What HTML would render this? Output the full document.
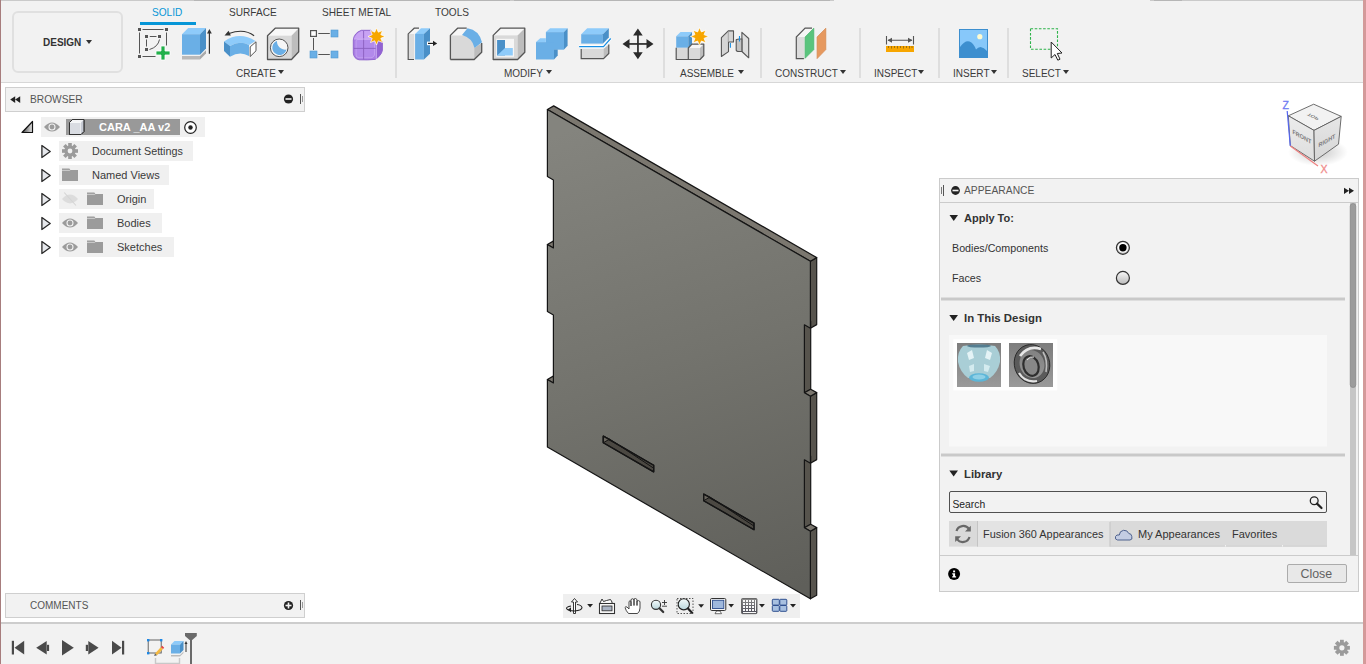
<!DOCTYPE html>
<html><head><meta charset="utf-8">
<style>
*{margin:0;padding:0;box-sizing:border-box}
html,body{width:1366px;height:664px;overflow:hidden;background:#fff;font-family:"Liberation Sans",sans-serif;color:#3c3c3c}
.a{position:absolute}
.t{position:absolute;white-space:nowrap;line-height:1}
svg{position:absolute;overflow:visible}
.lbl{font-size:10px;color:#3a3a3a}
.tri{position:absolute;width:0;height:0;border-left:3px solid transparent;border-right:3px solid transparent;border-top:4px solid #333}
.sep{position:absolute;top:28px;width:2px;height:50px;background:#dedede}
.row{position:absolute;height:20px;background:#f0f0f0}
.rt{font-size:10.6px;color:#3a3a3a}
</style></head><body>
<!-- toolbar -->
<div class="a" style="left:0;top:0;width:1366px;height:83px;background:#f2f2f2;border-bottom:1px solid #d7d7d7"></div>
<div class="a" style="left:0;top:0;width:194px;height:1px;background:#cacaca"></div>
<div class="a" style="left:194px;top:0;width:316px;height:1px;background:#b6b6b6"></div>
<div class="a" style="left:510px;top:0;width:4px;height:1px;background:#cacaca"></div>
<div class="a" style="left:514px;top:0;width:316px;height:1px;background:#b6b6b6"></div>
<div class="a" style="left:830px;top:0;width:4px;height:1px;background:#cacaca"></div>
<div class="a" style="left:1150px;top:0;width:4px;height:1px;background:#cacaca"></div>
<div class="a" style="left:1154px;top:0;width:28px;height:1px;background:#b6b6b6"></div>
<div class="a" style="left:1182px;top:0;width:184px;height:1px;background:#cacaca"></div>
<!-- design button -->
<div class="a" style="left:12px;top:11px;width:111px;height:62px;border:2px solid #e0e0e0;border-radius:6px;background:#f2f2f2"></div>
<div class="t" style="left:43px;top:38px;font-size:10px;font-weight:bold;color:#333">DESIGN</div>
<div class="tri" style="left:86px;top:40px"></div>
<!-- tabs -->
<div class="t" style="left:152px;top:8px;font-size:10.1px;color:#0696d7">SOLID</div>
<div class="a" style="left:140px;top:22px;width:56px;height:3px;background:#0696d7"></div>
<div class="t lbl" style="left:229px;top:8px;font-size:10.1px">SURFACE</div>
<div class="t lbl" style="left:322px;top:8px;font-size:10.1px">SHEET METAL</div>
<div class="t lbl" style="left:435px;top:8px;font-size:10.1px">TOOLS</div>
<!-- group labels -->
<div class="t lbl" style="left:236px;top:69px">CREATE</div><div class="tri" style="left:278px;top:70px"></div>
<div class="t lbl" style="left:504px;top:69px">MODIFY</div><div class="tri" style="left:546px;top:70px"></div>
<div class="t lbl" style="left:680px;top:69px">ASSEMBLE</div><div class="tri" style="left:738px;top:70px"></div>
<div class="t lbl" style="left:775px;top:69px">CONSTRUCT</div><div class="tri" style="left:840px;top:70px"></div>
<div class="t lbl" style="left:874px;top:69px">INSPECT</div><div class="tri" style="left:918px;top:70px"></div>
<div class="t lbl" style="left:953px;top:69px">INSERT</div><div class="tri" style="left:991px;top:70px"></div>
<div class="t lbl" style="left:1022px;top:69px">SELECT</div><div class="tri" style="left:1063px;top:70px"></div>
<div class="sep" style="left:395px"></div>
<div class="sep" style="left:663px"></div>
<div class="sep" style="left:760px"></div>
<div class="sep" style="left:859px"></div>
<div class="sep" style="left:938px"></div>
<div class="sep" style="left:1007px"></div>
<!--ICONS-->
<svg style="left:0;top:0" width="1366" height="90">
<defs>
<symbol id="star" viewBox="-10 -10 20 20"><path d="M0,-9.5 L2,-4.8 L6.7,-6.7 L4.8,-2 L9.5,0 L4.8,2 L6.7,6.7 L2,4.8 L0,9.5 L-2,4.8 L-6.7,6.7 L-4.8,2 L-9.5,0 L-4.8,-2 L-6.7,-6.7 L-2,-4.8 Z" fill="#f7a600" stroke="#fff" stroke-width="0.8"/></symbol>
</defs>
<!-- 1 sketch -->
<g fill="#555">
<rect x="138" y="28" width="3" height="3"/><rect x="165" y="28" width="3" height="3"/><rect x="138" y="55" width="3" height="3"/>
<rect x="145" y="35" width="3" height="3"/><rect x="158" y="35" width="3" height="3"/><rect x="145" y="48" width="3" height="3"/>
</g>
<g stroke="#555" stroke-width="1" fill="none">
<path d="M142.5,29.5 H163.5 M139.5,32.5 V53.5 M166.5,32.5 V45.5 M142.5,56.5 H155.5 M149.8,36.5 H156.5 M146.5,39.5 V46.5 M159.5,39.5 Q158,47 149.5,49.5"/>
</g>
<path d="M161,46 H165 V51 H170 V55 H165 V60 H161 V55 H156 V51 H161 Z" fill="#22b04b" stroke="#fff" stroke-width="0.8"/>
<!-- 2 extrude -->
<path d="M182,34.2 L188.2,28.1 H206 L200,34.2 Z" fill="#8ecbfa"/>
<rect x="182" y="34.2" width="18" height="20.5" fill="#6aafe6"/>
<path d="M200,34.2 L206,28.1 V48.5 L200,54.7 Z" fill="#4a90c8"/>
<path d="M182,56 H200 V59.5 H182 Z" fill="#b9b9b9"/><path d="M200,56 L206,50.3 V53.6 L200,59.5 Z" fill="#a9a9a9"/>
<path d="M209.4,33 V53.8" stroke="#333" stroke-width="1.2"/><path d="M207,33.5 L209.4,29 L211.8,33.5 Z" fill="#333"/>
<!-- 3 revolve -->
<path d="M254.1,35.7 Q244,28 229,33.5" stroke="#333" stroke-width="1.1" fill="none"/>
<path d="M224.5,35.6 L228.6,30.8 L230.8,35.4 Z" fill="#333"/>
<path d="M224,41.5 Q239.5,31 255.5,41 L249,45 Q240,40 230,46 Z" fill="#8ecbfa"/>
<path d="M230,46 Q240,40 249,45 V56 Q240,50.5 230,56.8 Z" fill="#6aafe6"/>
<path d="M224,41.5 L230,46 V56.8 L224,51 Z" fill="#4a90c8"/>
<path d="M250.2,46.9 L256,41.8 V50.8 L250.2,56.5 Z" fill="#fff" stroke="#555" stroke-width="1"/>
<!-- 4 hole -->
<path d="M267.5,35.7 L275.2,28.2 H298.7 L291.5,35.7 Z" fill="#f8f8f8"/>
<rect x="267.5" y="35.7" width="24" height="23.8" fill="#d9d9d9"/>
<path d="M291.5,35.7 L298.7,28.2 V51.7 L291.5,59.5 Z" fill="#bdbdbd"/>
<path d="M267.5,59.5 V35.7 L275.2,28.2 H298.7 V51.7 L291.5,59.5 Z" fill="none" stroke="#555" stroke-width="1.3" stroke-linejoin="round"/>
<circle cx="279.2" cy="47.8" r="8.8" fill="#f6f6f6" stroke="#555" stroke-width="1"/>
<path d="M277,41 A7.2,7.2 0 1 0 286.5,49.5 A8,8 0 0 1 277,41 Z" fill="#6aafe6"/>
<!-- 5 pattern -->
<rect x="310.6" y="30.6" width="5.8" height="5.8" fill="#fff" stroke="#555" stroke-width="1.2"/>
<rect x="331" y="30" width="7" height="7" fill="#6aafe6" stroke="#4f97d0" stroke-width="0.6"/>
<rect x="310" y="51" width="7" height="7" fill="#6aafe6" stroke="#4f97d0" stroke-width="0.6"/>
<rect x="331" y="51" width="7" height="7" fill="#6aafe6" stroke="#4f97d0" stroke-width="0.6"/>
<path d="M318.3,33.5 H329.8 M313.5,38 V50 M318.3,54.5 H329.8" stroke="#555" stroke-width="1"/>
<!-- 6 form -->
<path d="M353.3,40 Q354,33 361.3,30.3 H371 L382.4,42 V50.5 Q381,56 375.1,59.4 Q368,60.2 359,59.8 Q353.6,58.5 353.3,53 Z" fill="#a97ee3" stroke="#8d62cc" stroke-width="0.9"/>
<path d="M354,39.5 Q355,33.5 361.5,31 H371.5 L376.5,38.8 H354 Z" fill="#c8a2f4"/>
<path d="M376.3,38.8 L382.2,42.5 V50.5 Q381,55.5 376.3,58.8 Z" fill="#9263d2"/>
<path d="M356,41 Q356,39.5 358,39.5 H374.5 V55 Q374,57.5 371,57.8 H359 Q356,57.5 356,55 Z" fill="#b28aeb" stroke="#c6a6f3" stroke-width="0.8"/>
<path d="M363.6,31 V59.5 M353.8,48.4 H376" stroke="#8a5fc0" stroke-width="0.9"/>
<path d="M354,39 H376.3 V59" fill="none" stroke="#d6bdf7" stroke-width="0.8"/>
<use href="#star" x="367.5" y="27.5" width="18" height="18"/>
<!-- 7 press pull -->
<path d="M408.2,59.5 V33.9 L414.2,28.2 H419 V59.5 Z" fill="#f6f6f6"/>
<rect x="408.8" y="33.9" width="5.5" height="25.4" fill="#dcdcdc"/>
<path d="M414,59.5 H408.2 V33.9 L414.2,28.2 H419" fill="none" stroke="#555" stroke-width="1.2"/>
<path d="M415.1,33.9 L421,28.2 H430 L423.9,33.9 Z" fill="#8ecbfa"/>
<rect x="415.1" y="33.9" width="8.8" height="25.6" fill="#6aafe6"/>
<path d="M423.9,33.9 L430,28.2 V53.8 L423.9,59.5 Z" fill="#4a90c8"/>
<rect x="427" y="41.6" width="6" height="3.6" fill="#fff"/>
<path d="M428,43.4 H434" stroke="#222" stroke-width="1.2"/><path d="M433,40.8 L437.2,43.4 L433,46 Z" fill="#222"/>
<!-- 8 fillet -->
<path d="M450.4,35.4 L457.6,28.2 H467 L462,35.4 Z" fill="#f6f6f6"/>
<path d="M450.4,35.4 H462 Q474,36.5 474.2,48 V59.5 H450.4 Z" fill="#d9d9d9"/>
<path d="M474.2,48 L481.7,43 V52.3 L474.2,59.5 Z" fill="#bdbdbd"/>
<path d="M462,35 L467.5,28.2 Q479,30 482,42.2 L474.5,48 Q472.5,38 462,35 Z" fill="#6aafe6"/>
<path d="M450.4,59.5 V35.4 L457.6,28.2 H466.7 M450.4,59.5 H474.2 L481.7,52.3 V43" fill="none" stroke="#555" stroke-width="1.3" stroke-linejoin="round"/>
<!-- 9 shell -->
<path d="M493.2,35.4 L500.4,28.2 H524.8 L517.6,35.4 Z" fill="#f6f6f6"/>
<rect x="493.2" y="35.4" width="24.4" height="24.1" fill="#d9d9d9"/>
<path d="M517.6,35.4 L524.8,28.2 V52.3 L517.6,59.5 Z" fill="#bdbdbd"/>
<path d="M493.2,59.5 V35.4 L500.4,28.2 H524.8 V52.3 L517.6,59.5 Z" fill="none" stroke="#555" stroke-width="1.3" stroke-linejoin="round"/>
<rect x="496.2" y="38.8" width="17.8" height="18" fill="#f6f6f6"/>
<rect x="497.1" y="40" width="7.9" height="15.5" fill="#4a90c8"/>
<path d="M497.1,55.5 L505,48.1 H512.8 V55.6 H497.1 Z" fill="#8ecbfa"/>
<!-- 10 combine -->
<path d="M545.9,32.1 L550.1,28.2 H567.6 L564,32.1 Z" fill="#8ecbfa"/>
<rect x="545.9" y="32.1" width="18.1" height="17.6" fill="#6aafe6"/>
<path d="M564,32.1 L567.6,28.2 V45.7 L564,49.6 Z" fill="#4a90c8"/>
<path d="M536,42.1 L540.2,38.2 H545.9 V42.1 Z" fill="#8ecbfa"/>
<rect x="536" y="42.1" width="18" height="17.4" fill="#6aafe6"/>
<path d="M554,49.6 H557.7 V55.6 L554,59.5 Z" fill="#4a90c8"/>
<!-- 11 split -->
<path d="M581.2,34.2 L587.2,28.2 H608.8 L602.9,34.2 Z" fill="#8ecbfa"/>
<rect x="581.2" y="34.2" width="21.7" height="9.4" fill="#6aafe6"/>
<path d="M602.9,34.2 L608.8,28.2 V37.6 L602.9,43.6 Z" fill="#4a90c8"/>
<path d="M579.1,46.6 H603.5 L610.7,38.5" fill="none" stroke="#fff" stroke-width="3"/>
<path d="M579.1,46.6 H603.5 L610.7,38.5" fill="none" stroke="#1a8fe3" stroke-width="1.2"/>
<rect x="581.2" y="49" width="22.3" height="9.6" fill="#d9d9d9"/>
<path d="M603.5,49 L608.8,44.5 V53.5 L603.5,58.6 Z" fill="#bdbdbd"/>
<path d="M581.2,49 V58.6 H603.5 L608.8,53.5 V44.5" fill="none" stroke="#555" stroke-width="1.2"/>
<!-- 12 move -->
<g fill="#2b2b2b">
<rect x="637.1" y="33" width="1.7" height="22"/><rect x="627" y="43.1" width="22" height="1.7"/>
<path d="M637.9,28.5 L642.7,35.5 H633.1 Z M637.9,59.3 L642.7,52.2 H633.1 Z M622.5,43.9 L629.5,39.1 V48.7 Z M653.5,43.9 L646.5,39.1 V48.7 Z"/>
</g>
<!-- 13 new component -->
<path d="M676.2,36.3 L680.5,32.1 H692 L688.3,36.3 Z" fill="#8ecbfa"/>
<rect x="676.2" y="36.3" width="12.1" height="11.5" fill="#6aafe6"/>
<path d="M688.3,36.3 L692,32.1 V43.5 L688.3,47.8 Z" fill="#4a90c8"/>
<rect x="676.2" y="47.8" width="12.1" height="11.7" fill="#d9d9d9"/>
<path d="M688.3,48 L692,44.1 H703.8 L700,48 Z" fill="#f6f6f6"/>
<rect x="688.3" y="48" width="11.7" height="11.5" fill="#d9d9d9"/>
<path d="M700,48 L703.8,44.1 V55.5 L700,59.5 Z" fill="#bdbdbd"/>
<path d="M676.2,47.8 V59.5 H700 L703.8,55.5 V44.1 H692 L688.3,48 V59.5" fill="none" stroke="#555" stroke-width="1.2" stroke-linejoin="round"/>
<use href="#star" x="690" y="27" width="19" height="19"/>
<!-- 14 joint -->
<path d="M721.4,56.5 V37.6 L728.3,30.9 H733.5 V42 H728.5 V51.6 Z" fill="#d5d5d5" stroke="#555" stroke-width="1.1" stroke-linejoin="round"/>
<path d="M728.3,31.5 V42" stroke="#999" stroke-width="0.8"/>
<path d="M741.9,32.4 L748.7,38.5 V57.8 L741.9,51.5 Z" fill="#dedede" stroke="#555" stroke-width="1.1" stroke-linejoin="round"/>
<path d="M736.2,40 Q736.2,39 739,39 H741.9 V51.5 H739 Q736.2,51.5 736.2,50 Z" fill="#c4c4c4" stroke="#555" stroke-width="1.1"/>
<path d="M730.4,43 V47.8 M739.5,36 V41.5" stroke="#1a8fe3" stroke-width="1.1"/>
<!-- 15 construct -->
<path d="M796.3,58.6 V37 L805.1,28.2 H812 L805.1,37 Z" fill="#f6f6f6"/>
<rect x="797" y="37" width="7.5" height="21.6" fill="#dcdcdc"/>
<path d="M803.9,58.6 H796.3 V37 L805.1,28.2 H812" fill="none" stroke="#555" stroke-width="1.2"/>
<path d="M805.1,37 L813.8,28.2 V49.6 L805.1,58.3 Z" fill="#5ac47d" stroke="#46b46a" stroke-width="0.7"/>
<path d="M817.1,37 L825.8,28.2 V49.6 L817.1,58.6 Z" fill="#e6995f" stroke="#d5874c" stroke-width="0.7"/>
<!-- 16 inspect -->
<path d="M886.5,36 V44.5 M913.5,36 V44.5 M888,40.3 H912" stroke="#555" stroke-width="1.1"/>
<path d="M887.5,40.3 L892,37.8 V42.8 Z M912.5,40.3 L908,37.8 V42.8 Z" fill="#555"/>
<rect x="886" y="46" width="28" height="6" fill="#f7a600"/>
<path d="M888.5,46 V48 M891.5,46 V48.5 M894.5,46 V48 M897.5,46 V48.5 M900.5,46 V48 M903.5,46 V48.5 M906.5,46 V48 M909.5,46 V48.5 M912,46 V48" stroke="#7a5a10" stroke-width="0.7"/>
<!-- 17 insert -->
<rect x="959" y="29" width="29" height="29" fill="#3d8fcf"/>
<rect x="960" y="30" width="27" height="27" fill="#87c8fa"/>
<circle cx="979.8" cy="36.7" r="2.6" fill="#fffbd0"/>
<path d="M960,47 Q965,40 969.5,41.5 Q973.5,43 976,49.5 Q978,47 980.5,47 Q984,47.5 987,51 V57 H960 Z" fill="#3d8fcf"/>
<!-- 18 select -->
<rect x="1030.5" y="28.7" width="27" height="20.5" fill="none" stroke="#2db34a" stroke-width="1.1" stroke-dasharray="2.6 1.6"/>
<path d="M1051.2,42 V58 L1055,54.5 L1057.8,60.2 L1060,59.2 L1057.3,53.5 L1062,53 Z" fill="#fff" stroke="#222" stroke-width="1" stroke-linejoin="round"/>
</svg>

<!--/ICONS-->

<!-- browser -->
<div class="a" style="left:5px;top:87px;width:300px;height:25px;background:#f2f2f2;border:1px solid #cfcfcf"></div>
<div class="t" style="left:30px;top:95px;font-size:10.2px;color:#555">BROWSER</div>
<!--TREE-->
<svg style="left:0;top:0" width="310" height="260">
<defs><linearGradient id="tg" x1="0" y1="0" x2="1" y2="0"><stop offset="0" stop-color="#444"/><stop offset="1" stop-color="#e6e6e6"/></linearGradient>
<symbol id="otri" viewBox="0 0 10 14"><path d="M0.9,0.9 L9.2,7 L0.9,13.1 Z" fill="#e6e8ec" stroke="#2a2a2a" stroke-width="1.3" stroke-linejoin="round"/></symbol>
<symbol id="fold" viewBox="0 0 16 14"><path d="M0,0.5 H7.3 L8.5,1.8 H16 V13 H0 Z" fill="#9b9b9b"/><path d="M0,2.3 H7.6 L8.6,1.6" stroke="#f0f0f0" stroke-width="0.6" fill="none"/></symbol>
<symbol id="eye" viewBox="0 0 16 10"><path d="M0,5 Q8,-4.2 16,5 Q8,14.2 0,5 Z" fill="#9b9b9b"/><circle cx="8" cy="5" r="3" fill="none" stroke="#f0f0f0" stroke-width="1.1"/></symbol>
</defs>
<!-- browser header icons -->
<path d="M10.2,99.6 L15.2,96.3 V102.9 Z M15.2,99.6 L20.2,96.3 V102.9 Z" fill="#222"/>
<circle cx="288.5" cy="99" r="4.6" fill="#222"/><rect x="285.5" y="98.2" width="6" height="1.6" fill="#f2f2f2"/>
<rect x="300" y="94" width="1" height="10" fill="#555"/><rect x="302" y="96" width="1" height="6" fill="#999"/>
<!-- row0 -->
<path d="M22,132.5 L32.5,121.5 V132.5 Z" fill="url(#tg)" stroke="#111" stroke-width="1.2" stroke-linejoin="round"/>
<rect x="41" y="117" width="164" height="20" fill="#f0f0f0"/>
<use href="#eye" x="44" y="122" width="16" height="10"/>
<rect x="66" y="119" width="114" height="16" fill="#999"/>
<path d="M69.5,122.5 L72.5,119.5 H84 V131.5 L81,134.5 H69.5 Z" fill="#d9dce2" stroke="#333" stroke-width="1"/>
<path d="M69.5,122.5 H81 V134.5 M81,122.5 L84,119.5" fill="none" stroke="#fff" stroke-width="0.8"/>
<path d="M70,122.5 L72.5,120 H83.5 L81,122.5 Z" fill="#f4f5f7"/>
<path d="M81,122.5 L83.5,120 V131.5 L81,134 Z" fill="#c6cad3"/>
<path d="M69.5,122.5 L72.5,119.5 H84 V131.5 L81,134.5 H69.5 Z" fill="none" stroke="#333" stroke-width="1"/>
<circle cx="190.5" cy="127.5" r="5.8" fill="#fff" stroke="#222" stroke-width="1.2"/><circle cx="190.5" cy="127.5" r="2.2" fill="#222"/>
<!-- rows 1..5 -->
<g>
<use href="#otri" x="41" y="144.5" width="10" height="14"/>
<use href="#otri" x="41" y="168.5" width="10" height="14"/>
<use href="#otri" x="41" y="192.5" width="10" height="14"/>
<use href="#otri" x="41" y="216.5" width="10" height="14"/>
<use href="#otri" x="41" y="240.5" width="10" height="14"/>
</g>
<rect x="59" y="141" width="134" height="20" fill="#f0f0f0"/>
<rect x="59" y="165" width="110" height="20" fill="#f0f0f0"/>
<rect x="59" y="189" width="95" height="20" fill="#f0f0f0"/>
<rect x="59" y="213" width="103" height="20" fill="#f0f0f0"/>
<rect x="59" y="237" width="115" height="20" fill="#f0f0f0"/>
<!-- gear -->
<g transform="translate(70,151)" fill="#9b9b9b">
<circle r="5.6"/>
<g id="teeth"><rect x="-1.8" y="-8" width="3.6" height="16"/><rect x="-1.8" y="-8" width="3.6" height="16" transform="rotate(45)"/><rect x="-1.8" y="-8" width="3.6" height="16" transform="rotate(90)"/><rect x="-1.8" y="-8" width="3.6" height="16" transform="rotate(135)"/></g>
<circle r="2.4" fill="#f0f0f0"/>
</g>
<use href="#fold" x="62" y="168.1" width="16" height="14"/>
<use href="#fold" x="87" y="192.1" width="16" height="14"/>
<use href="#fold" x="87" y="216.1" width="16" height="14"/>
<use href="#fold" x="87" y="240.1" width="16" height="14"/>
<!-- origin hidden eye -->
<path d="M62,199 Q70,190.2 78,199 Q70,207.8 62,199 Z" fill="#dcdcdc"/><path d="M64.2,192.5 L76,205.5" stroke="#d4d4d4" stroke-width="1.1"/>
<use href="#eye" x="62" y="218" width="16" height="10"/>
<use href="#eye" x="62" y="242" width="16" height="10"/>
</svg>
<div class="t" style="left:99px;top:122px;font-size:11px;font-weight:bold;color:#fff">CARA _AA v2</div>
<div class="t rt" style="left:92px;top:146px;font-size:10.75px">Document Settings</div>
<div class="t rt" style="left:92px;top:170px;font-size:11px">Named Views</div>
<div class="t rt" style="left:117px;top:194px;font-size:11px">Origin</div>
<div class="t rt" style="left:117px;top:218px;font-size:11px">Bodies</div>
<div class="t rt" style="left:117px;top:242px;font-size:11px">Sketches</div>

<!--/TREE-->

<!-- comments -->
<div class="a" style="left:5px;top:593px;width:300px;height:25px;background:#f2f2f2;border:1px solid #cfcfcf"></div>
<div class="t" style="left:30px;top:601px;font-size:10px;color:#555">COMMENTS</div>
<svg style="left:0;top:0" width="310" height="664"><!-- comments header icons -->
<circle cx="288.5" cy="605.5" r="4.6" fill="#222"/><rect x="285.5" y="604.7" width="6" height="1.6" fill="#f2f2f2"/><rect x="287.7" y="602.5" width="1.6" height="6" fill="#f2f2f2"/>
<rect x="300" y="600" width="1" height="10" fill="#555"/><rect x="302" y="602" width="1" height="6" fill="#999"/>
</svg>

<!--BODY-->
<svg class="a" style="left:0;top:0" width="1366" height="664" viewBox="0 0 1366 664">
<defs><linearGradient id="fg" gradientUnits="userSpaceOnUse" x1="600" y1="120" x2="760" y2="600"><stop offset="0" stop-color="#84847e"/><stop offset="0.5" stop-color="#73736d"/><stop offset="1" stop-color="#5f5f5a"/></linearGradient></defs>
<polygon points="810.40,261.25 810.40,328.25 816.70,324.61 816.70,257.61" fill="#57544d" stroke="#151515" stroke-width="1.2" stroke-linejoin="round"/>
<polygon points="804.40,324.79 804.40,392.79 810.70,389.15 810.70,321.15" fill="#57544d" stroke="#151515" stroke-width="1.2" stroke-linejoin="round"/>
<polygon points="810.40,396.25 810.40,463.25 816.70,459.61 816.70,392.61" fill="#57544d" stroke="#151515" stroke-width="1.2" stroke-linejoin="round"/>
<polygon points="804.40,459.79 804.40,527.79 810.70,524.15 810.70,456.15" fill="#57544d" stroke="#151515" stroke-width="1.2" stroke-linejoin="round"/>
<polygon points="810.40,531.25 810.40,598.85 816.70,595.21 816.70,527.61" fill="#57544d" stroke="#151515" stroke-width="1.2" stroke-linejoin="round"/>
<polygon points="547.40,109.50 810.40,261.25 816.70,257.61 553.70,105.86" fill="#7b776f" stroke="#151515" stroke-width="1.2" stroke-linejoin="round"/>
<polygon points="804.40,392.79 810.40,396.25 816.70,392.61 810.70,389.15" fill="#7b776f" stroke="#151515" stroke-width="1.2" stroke-linejoin="round"/>
<polygon points="804.40,527.79 810.40,531.25 816.70,527.61 810.70,524.15" fill="#7b776f" stroke="#151515" stroke-width="1.2" stroke-linejoin="round"/>
<polygon points="547.40,379.50 553.40,382.96 559.70,379.32 553.70,375.86" fill="#7b776f" stroke="#151515" stroke-width="1.2" stroke-linejoin="round"/>
<polygon points="547.40,244.50 553.40,247.96 559.70,244.32 553.70,240.86" fill="#7b776f" stroke="#151515" stroke-width="1.2" stroke-linejoin="round"/>
<polygon points="547.40,109.50 810.40,261.25 810.40,328.25 804.40,324.79 804.40,392.79 810.40,396.25 810.40,463.25 804.40,459.79 804.40,527.79 810.40,531.25 810.40,598.85 547.40,447.10 547.40,379.50 553.40,382.96 553.40,314.96 547.40,311.50 547.40,244.50 553.40,247.96 553.40,179.96 547.40,176.50" fill="url(#fg)" stroke="#151515" stroke-width="1.2" stroke-linejoin="round"/>
<polygon points="603.30,436.15 653.70,465.24 653.70,471.84 603.30,442.75" fill="#4b4842" stroke="#151515" stroke-width="1.3" stroke-linejoin="round"/>
<polygon points="603.30,436.15 603.30,442.75 609.60,439.11" fill="#6a665e" stroke="#151515" stroke-width="1" stroke-linejoin="round"/>
<line x1="609.60" y1="439.11" x2="653.70" y2="468.20" stroke="#151515" stroke-width="1"/>
<polygon points="603.30,436.15 653.70,465.24 653.70,471.84 603.30,442.75" fill="none" stroke="#151515" stroke-width="1.3" stroke-linejoin="round"/>
<polygon points="703.70,494.09 754.00,523.11 754.00,529.71 703.70,500.69" fill="#4b4842" stroke="#151515" stroke-width="1.3" stroke-linejoin="round"/>
<polygon points="703.70,494.09 703.70,500.69 710.00,497.05" fill="#6a665e" stroke="#151515" stroke-width="1" stroke-linejoin="round"/>
<line x1="710.00" y1="497.05" x2="754.00" y2="526.07" stroke="#151515" stroke-width="1"/>
<polygon points="703.70,494.09 754.00,523.11 754.00,529.71 703.70,500.69" fill="none" stroke="#151515" stroke-width="1.3" stroke-linejoin="round"/>
</svg>
<!--/BODY-->

<!--VIEWCUBE-->
<svg style="left:0;top:0" width="1366" height="664">
<defs>
<radialGradient id="vcs" cx="0.5" cy="0.5" r="0.5"><stop offset="0" stop-color="#000" stop-opacity="0.22"/><stop offset="1" stop-color="#000" stop-opacity="0"/></radialGradient>
<linearGradient id="vcl" x1="0" y1="0" x2="0" y2="1"><stop offset="0" stop-color="#ececec"/><stop offset="1" stop-color="#dedede"/></linearGradient>
<linearGradient id="vcr" x1="0" y1="0" x2="0" y2="1"><stop offset="0" stop-color="#e6e6e6"/><stop offset="1" stop-color="#d6d6d6"/></linearGradient>
</defs>
<ellipse cx="1318" cy="152" rx="30" ry="14" fill="url(#vcs)"/>
<path d="M1313.7,104.2 L1341.2,116.4 L1314,130.4 L1288.3,115.8 Z" fill="#f2f2f2" stroke="#5e5e5e" stroke-width="0.9" stroke-linejoin="round"/>
<path d="M1288.3,115.8 L1314,130.4 L1314.5,161.2 L1290.3,145.6 Z" fill="url(#vcl)" stroke="#5e5e5e" stroke-width="0.9" stroke-linejoin="round"/>
<path d="M1314,130.4 L1341.2,116.4 L1338.5,144.2 L1314.5,161.2 Z" fill="url(#vcr)" stroke="#5e5e5e" stroke-width="0.9" stroke-linejoin="round"/>
<g font-family="Liberation Sans" font-size="6.2" fill="#7a7a7a" font-weight="bold">
<text transform="matrix(0.88,0.5,0,1,1292.5,133.5)">FRONT</text>
<text transform="matrix(0.88,-0.5,0,1,1318.5,147.5)">RIGHT</text>
<text transform="matrix(0.85,0.42,0.55,-0.45,1309,113)">TOP</text>
</g>
<path d="M1287.2,111 L1290.3,146" stroke="#5566f0" stroke-width="1.2"/>
<path d="M1290.3,146 L1318,166" stroke="#ee8080" stroke-width="1.2"/>
<text x="1282.5" y="108.6" font-family="Liberation Sans" font-size="10.5" fill="#6f7cf2" stroke="#6f7cf2" stroke-width="0.3">Z</text>
<text x="1320.5" y="173.2" font-family="Liberation Sans" font-size="10.5" fill="#f08c8c" stroke="#f08c8c" stroke-width="0.3">X</text>
</svg>

<!--/VIEWCUBE-->

<!--VIEWBAR-->
<svg style="left:0;top:0" width="1366" height="664">
<defs>
<linearGradient id="mg" x1="0" y1="0" x2="0" y2="1"><stop offset="0" stop-color="#f4fbfb"/><stop offset="1" stop-color="#b9d6dc"/></linearGradient>
<linearGradient id="gg" x1="0" y1="0" x2="0" y2="1"><stop offset="0" stop-color="#8a8a8a"/><stop offset="1" stop-color="#4a4a55"/></linearGradient>
</defs>
<rect x="563" y="594" width="237" height="24" fill="#efefef"/>
<!-- orbit -->
<path d="M574.5,598.5 L577.5,602 H575.5 V613.5 H573.5 V602 H571.5 Z" fill="#fff" stroke="#222" stroke-width="0.9" stroke-linejoin="round"/>
<path d="M571,606 Q566,607 566.5,608.5 Q568,611 574.5,611 Q582,610.5 582,607.5 Q581.5,605 577,604.5" fill="none" stroke="#222" stroke-width="1.1"/>
<path d="M567.8,609.8 L571,607.3 V612.3 Z" fill="#222"/>
<path d="M587.2,604 H593 L590.1,607.6 Z" fill="#222"/>
<!-- look at -->
<path d="M599.5,604 L602,599 L603.5,601.5 L606.5,600.5 L610.5,599.5 L612,602 V604 Z" fill="#fff" stroke="#333" stroke-width="1"/>
<rect x="599.5" y="603.5" width="15" height="10" fill="#fff" stroke="#333" stroke-width="1.1"/>
<rect x="602" y="606" width="10" height="4.8" fill="#a9b3c3" stroke="#333" stroke-width="0.9"/>
<!-- hand -->
<path d="M628.5,613.5 Q626,611 625,607.5 Q625.5,606.3 627,607 L629,609 V601.5 Q630,600 631,601.5 V606 V599.5 Q632.5,598 634,599.5 V605.5 V599 Q635.5,597.8 637,599.5 V605.5 V601 Q638.5,600 640,601.5 V608 Q640,611.5 637.5,613.5 Z" fill="#fff" stroke="#333" stroke-width="0.9" stroke-linejoin="round"/>
<!-- zoom -->
<circle cx="656" cy="604.8" r="4.6" fill="url(#mg)" stroke="#333" stroke-width="1.1"/>
<path d="M659.5,608.3 L663.2,612" stroke="#333" stroke-width="2.2" stroke-linecap="round"/>
<path d="M662,602.5 H667 M664.5,600 V605 M662,606.2 H667" stroke="#333" stroke-width="0.9"/>
<!-- zoom window -->
<rect x="677" y="598.5" width="16" height="15" fill="none" stroke="#444" stroke-width="0.9" stroke-dasharray="1.5 1.5"/>
<circle cx="683.8" cy="604.3" r="5.6" fill="url(#mg)" stroke="#222" stroke-width="1.1"/>
<path d="M688,608.5 L692,612.8" stroke="#222" stroke-width="2.2" stroke-linecap="round"/>
<path d="M698.2,604.3 H704.1 L701.15,607.8 Z" fill="#222"/>
<!-- display -->
<rect x="710.5" y="598.5" width="15.3" height="12" rx="1.2" fill="#f4f4f4" stroke="#333" stroke-width="1"/>
<rect x="712.5" y="600.3" width="11.3" height="8.2" fill="#9fb8dc" stroke="#2d4d8c" stroke-width="0.9"/>
<path d="M715,613.7 L716.5,611 H720 L721.5,613.7 Z" fill="#fff" stroke="#333" stroke-width="0.7"/>
<path d="M728.3,604 H734 L731.15,607.6 Z" fill="#222"/>
<!-- grid -->
<rect x="741.5" y="598.5" width="15.5" height="15.2" rx="1" fill="url(#gg)" stroke="#555" stroke-width="0.8"/>
<g fill="#f8f8f8">
<rect x="743" y="600" width="2" height="2"/><rect x="746" y="600" width="2" height="2"/><rect x="749" y="600" width="2" height="2"/><rect x="752" y="600" width="2" height="2"/>
<rect x="743" y="603" width="2" height="2"/><rect x="746" y="603" width="2" height="2"/><rect x="749" y="603" width="2" height="2"/><rect x="752" y="603" width="2" height="2"/>
<rect x="743" y="606" width="2" height="2"/><rect x="746" y="606" width="2" height="2"/><rect x="749" y="606" width="2" height="2"/><rect x="752" y="606" width="2" height="2"/>
<rect x="743" y="609" width="2" height="2"/><rect x="746" y="609" width="2" height="2"/><rect x="749" y="609" width="2" height="2"/><rect x="752" y="609" width="2" height="2"/>
<rect x="755" y="600" width="1" height="11"/>
<rect x="743" y="612" width="13" height="1"/>
</g>
<path d="M759,604 H764.9 L761.95,607.6 Z" fill="#222"/>
<!-- viewports -->
<g fill="#a8c0e0" stroke="#2f4f8f" stroke-width="1">
<rect x="772.3" y="599.3" width="7" height="5.8" rx="0.8"/><rect x="779.8" y="599.3" width="7" height="5.8" rx="0.8"/>
<rect x="772.3" y="605.5" width="7" height="5.8" rx="0.8"/><rect x="779.8" y="605.5" width="7" height="5.8" rx="0.8"/>
</g>
<path d="M790,604 H796 L793,607.6 Z" fill="#222"/>
</svg>

<!--/VIEWBAR-->

<!--PANEL-->
<div class="a" style="left:939px;top:178px;width:420px;height:414px;background:#f2f2f2;border:1px solid #cbcbcb"></div>
<div class="a" style="left:940px;top:202px;width:418px;height:1px;background:#cbcbcb"></div>
<svg style="left:0;top:0" width="1366" height="664">
<defs>
<linearGradient id="rg" x1="0" y1="0" x2="0" y2="1"><stop offset="0" stop-color="#fafafa"/><stop offset="1" stop-color="#b9b9b9"/></linearGradient>
<radialGradient id="glass" cx="0.5" cy="0.45" r="0.55"><stop offset="0" stop-color="#c9e3e8"/><stop offset="0.8" stop-color="#a9d2da"/><stop offset="1" stop-color="#8fbfca"/></radialGradient>
<linearGradient id="tbg" x1="0" y1="0" x2="0" y2="1"><stop offset="0" stop-color="#7d7d7d"/><stop offset="1" stop-color="#9a9a9a"/></linearGradient>
</defs>
<rect x="941" y="187" width="1" height="7" fill="#777"/><rect x="943" y="185" width="1" height="11" fill="#555"/>
<circle cx="955.5" cy="190.5" r="4.4" fill="#222"/><rect x="952.5" y="189.7" width="6" height="1.6" fill="#f2f2f2"/>
<path d="M1344,187.7 L1349,190.8 L1344,193.9 Z M1349,187.7 L1354,190.8 L1349,193.9 Z" fill="#222"/>
<!-- scrollbar -->
<rect x="1350" y="203" width="6" height="352" fill="#c6c6c6"/>
<rect x="1350.2" y="203.5" width="5.6" height="184" rx="2.8" fill="#9c9c9c" stroke="#858585" stroke-width="0.6"/>
<!-- section triangles -->
<path d="M949.5,215 H958 L953.75,221 Z" fill="#222"/>
<path d="M949.3,315 H958 L953.65,321 Z" fill="#222"/>
<path d="M949.3,470.5 H958 L953.65,476.5 Z" fill="#222"/>
<!-- radios -->
<circle cx="1122.9" cy="247.8" r="6.5" fill="url(#rg)" stroke="#333" stroke-width="1.2"/>
<circle cx="1122.9" cy="247.8" r="5" fill="#fff"/>
<circle cx="1122.9" cy="247.8" r="3.7" fill="#000"/>
<circle cx="1122.9" cy="277.9" r="6.5" fill="url(#rg)" stroke="#333" stroke-width="1.2"/>
<!-- separators -->
<rect x="941" y="297.5" width="404" height="3" fill="#c9c9c9"/>
<rect x="941" y="453.5" width="404" height="3" fill="#c9c9c9"/>
<!-- swatch area -->
<rect x="949" y="335" width="378" height="111.5" fill="#f8f8f8"/>
<rect x="953.3" y="339.2" width="104" height="51.2" fill="#fff"/>
<rect x="957" y="343" width="44" height="44" fill="url(#tbg)"/>
<path d="M963,346 Q979,343 995,346 Q1001,352 1000,362 Q998,372 990,378 L968,378 Q960,372 958,362 Q957,352 963,346 Z" fill="#a9ced6"/>
<ellipse cx="979" cy="346" rx="12" ry="1.6" fill="#3f6a80" opacity="0.8"/>
<path d="M967,353 L972,350 L974,358 L969,360 Z M987,350 L992,353 L990,360 L985,358 Z" fill="#e4f3f6"/>
<path d="M969,366 L974,364 L974,371 L970,372 Z M984,364 L990,366 L988,372 L984,371 Z" fill="#d4ebef"/>
<ellipse cx="979" cy="377.5" rx="10" ry="4.3" fill="#5cb6d8"/>
<ellipse cx="979" cy="377" rx="6.5" ry="2.4" fill="#8fd0e6"/>
<rect x="1009" y="343" width="44" height="44" fill="url(#tbg)"/>
<ellipse cx="1032" cy="364" rx="15" ry="17" transform="rotate(-18 1032 364)" fill="none" stroke="#5a5a5a" stroke-width="5.5"/><ellipse cx="1032" cy="364" rx="17.6" ry="19.6" transform="rotate(-18 1032 364)" fill="none" stroke="#2a2a2a" stroke-width="0.9"/>
<path d="M1020,356 Q1028,345 1041,349" fill="none" stroke="#f0f0f0" stroke-width="2.6" opacity="0.95"/>
<path d="M1043,352 Q1048,360 1046,372" fill="none" stroke="#bdbdbd" stroke-width="1.6"/>
<path d="M1019,373 Q1025,383 1037,381" fill="none" stroke="#e4e4e4" stroke-width="2.2"/>
<ellipse cx="1031" cy="366" rx="7.5" ry="10" transform="rotate(-18 1031 366)" fill="#878787" stroke="#2e2e2e" stroke-width="2.2"/>
<path d="M1027,360 Q1030,356 1034,357" fill="none" stroke="#eee" stroke-width="1"/>
<!-- search -->
<rect x="949.5" y="491.5" width="377" height="21" rx="1.5" fill="#f2f2f2" stroke="#505050" stroke-width="1"/>
<circle cx="1314.2" cy="500.8" r="3.9" fill="none" stroke="#222" stroke-width="1.3"/>
<path d="M1317,503.6 L1321.5,508" stroke="#222" stroke-width="2.2" stroke-linecap="round"/>
<!-- tabs -->
<rect x="949" y="521" width="378" height="25.6" fill="#dadada"/>
<rect x="977" y="521" width="133" height="25.6" fill="#e3e3e3"/>
<rect x="977" y="521" width="1" height="25.6" fill="#c4c4c4"/>
<rect x="1109.5" y="522" width="1" height="24.6" fill="#c4c4c4"/>
<rect x="1110" y="545.6" width="217" height="1" fill="#cfcfcf"/>
<rect x="1225" y="545" width="1" height="1.6" fill="#f2f2f2"/>
<rect x="1282" y="545" width="1" height="1.6" fill="#f2f2f2"/>
<!-- refresh icon -->
<g fill="none" stroke="#686868" stroke-width="2.2">
<path d="M956.5,531 A7,7 0 0 1 969,529"/>
<path d="M969.5,537 A7,7 0 0 1 957,539"/>
</g>
<path d="M970.8,525.8 V531.6 H965 Z" fill="#686868"/>
<path d="M955.2,542 V536.2 H961 Z" fill="#686868"/>
<!-- cloud -->
<path d="M1117.5,540 Q1114.5,539.5 1115.5,536.5 Q1116.5,534.3 1119.3,535 Q1119.5,531 1123.5,530.3 Q1127.5,530 1128.8,533.5 Q1131.5,533.5 1131.8,536.5 Q1132.8,539.8 1130,540 Z" fill="#c4cde3" stroke="#4f628e" stroke-width="1"/>
<!-- footer -->
<rect x="940" y="555" width="418" height="1" fill="#cbcbcb"/>
<circle cx="954.1" cy="573.9" r="6" fill="#000"/>
<rect x="953.1" y="570.5" width="2" height="1.8" fill="#fff"/>
<path d="M952.2,573.3 H955.1 V576.3 H956.1 V577.5 H952.2 V576.3 H953.1 V574.5 H952.2 Z" fill="#fff"/>
<rect x="1287.5" y="564.5" width="59" height="18" rx="1.5" fill="#e8e8e8" stroke="#ababab" stroke-width="1"/>
</svg>
<div class="t" style="left:964px;top:186px;font-size:10.3px;color:#555">APPEARANCE</div>
<div class="t" style="left:964px;top:213px;font-size:11px;font-weight:bold;color:#333">Apply To:</div>
<div class="t" style="left:952px;top:243px;font-size:10.7px;color:#333">Bodies/Components</div>
<div class="t" style="left:952px;top:273px;font-size:10.7px;color:#333">Faces</div>
<div class="t" style="left:964px;top:313px;font-size:11.4px;font-weight:bold;color:#333">In This Design</div>
<div class="t" style="left:964px;top:469px;font-size:11.3px;font-weight:bold;color:#333">Library</div>
<div class="t" style="left:952.5px;top:500px;font-size:10.3px;color:#222">Search</div>
<div class="t" style="left:983px;top:529px;font-size:10.9px;color:#333">Fusion 360 Appearances</div>
<div class="t" style="left:1138px;top:529px;font-size:11px;color:#333">My Appearances</div>
<div class="t" style="left:1232px;top:529px;font-size:11px;color:#333">Favorites</div>
<div class="t" style="left:1300.5px;top:568px;font-size:12.4px;color:#626262">Close</div>

<!--/PANEL-->

<!-- timeline -->
<div class="a" style="left:0;top:622px;width:1366px;height:42px;background:#f2f2f2;border-top:2px solid #cdcdcd"></div>
<!--TIMELINE-->
<svg style="left:0;top:0" width="1366" height="664">
<g fill="#4a4a4a">
<rect x="11.8" y="640.8" width="2.2" height="13.7"/><path d="M24.2,640.8 V654.5 L14.5,647.65 Z"/>
<path d="M36.2,647.8 L46.7,641 V654.6 Z"/><rect x="47" y="644.8" width="2.1" height="6.2"/>
<path d="M62,640 V655.6 L73.8,647.8 Z"/>
<rect x="85.8" y="644.8" width="2.2" height="6.2"/><path d="M88.3,641 V654.6 L98.6,647.8 Z"/>
<path d="M112,640.8 V654.5 L121.6,647.65 Z"/><rect x="122" y="640.8" width="2.2" height="13.7"/>
</g>
<!-- sketch feature -->
<rect x="148.2" y="640" width="13" height="13" fill="none" stroke="#555" stroke-width="0.9"/>
<g fill="#1e88e5"><rect x="147" y="639" width="2.4" height="2.4"/><rect x="160" y="639" width="2.4" height="2.4"/><rect x="147" y="652" width="2.4" height="2.4"/></g>
<path d="M155,653.5 L161,647 L163,649 L157,655.2 Z" fill="#f5b940"/>
<path d="M161,647 L162.2,645.8 L164.2,647.8 L163,649 Z" fill="#e84040"/>
<path d="M155,653.5 L157,655.2 L154.2,656 Z" fill="#555"/>
<!-- extrude feature -->
<path d="M171,644.5 L174.5,641 H183.5 L180,644.5 Z" fill="#8ecbfa"/>
<rect x="171" y="644.5" width="9" height="9" fill="#6aafe6"/>
<path d="M180,644.5 L183.5,641 V650 L180,653.5 Z" fill="#4a90c8"/>
<path d="M171,655 H180 L183.5,651.5 V653 L180,656.5 H171 Z" fill="#bbb"/>
<path d="M186,643 V652" stroke="#333" stroke-width="1"/><path d="M184.5,644 L186,641 L187.5,644 Z" fill="#333"/>
<!-- bracket -->
<path d="M155.5,658 V663.5 H179.5 V658" fill="none" stroke="#c8c8c8" stroke-width="1.4"/>
<!-- marker -->
<path d="M185,633 H196.8 V636 L192.2,640 H189.6 L185,636 Z" fill="#6a6a6a"/>
<rect x="190" y="639" width="2" height="25" fill="#6a6a6a"/>
<!-- gear -->
<g transform="translate(1341.9,647.8)" fill="#9b9b9b">
<circle r="5.8"/>
<rect x="-1.9" y="-8" width="3.8" height="16"/><rect x="-1.9" y="-8" width="3.8" height="16" transform="rotate(45)"/><rect x="-1.9" y="-8" width="3.8" height="16" transform="rotate(90)"/><rect x="-1.9" y="-8" width="3.8" height="16" transform="rotate(135)"/>
<circle r="2.6" fill="#f2f2f2"/>
</g>
</svg>

<!--/TIMELINE-->

<!-- window borders -->
<div class="a" style="left:0;top:0;width:1px;height:664px;background:#a77d7d"></div>
<div class="a" style="left:1363px;top:0;width:3px;height:664px;background:#d49a9a"></div>
</body></html>
